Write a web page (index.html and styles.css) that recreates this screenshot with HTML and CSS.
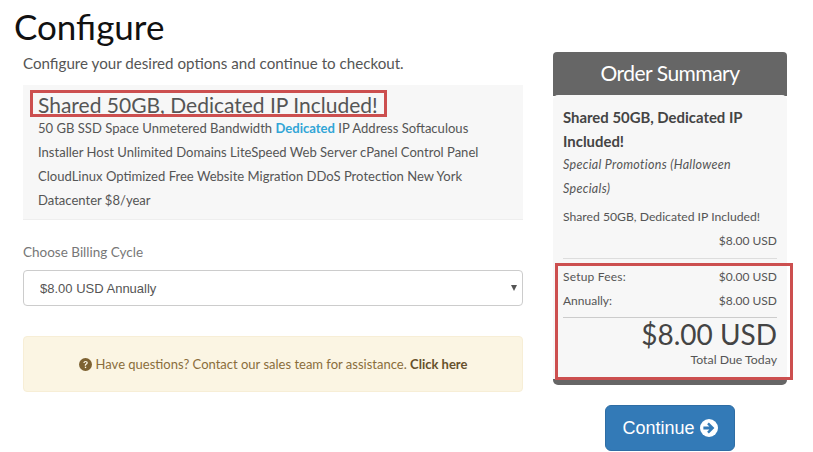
FILE: index.html
```html
<!DOCTYPE html>
<html lang="en">
<head>
<meta charset="utf-8">
<title>Configure</title>
<link rel="stylesheet" href="styles.css">
</head>
<body>
<h1 class="title">Configure</h1>
<div class="layout">
  <main class="main">
    <p class="intro">Configure your desired options and continue to checkout.</p>
    <section class="product">
      <h2 class="product-name">Shared 50GB, Dedicated IP Included!</h2>
      <p class="features">50 GB SSD Space Unmetered Bandwidth <span class="accent">Dedicated</span> IP Address Softaculous Installer Host Unlimited Domains LiteSpeed Web Server cPanel Control Panel CloudLinux Optimized Free Website Migration DDoS Protection New York Datacenter $8/year</p>
      <span class="mark mark-product"></span>
    </section>
    <label class="field-label" for="cycle">Choose Billing Cycle</label>
    <div class="select-wrap">
      <select class="select" id="cycle"><option>$8.00 USD Annually</option></select>
    </div>
    <div class="alert">
      <svg class="alert-icon" viewBox="0 0 24 24" aria-hidden="true"><circle cx="12" cy="12" r="12" fill="#7d6232"/><path d="M8 9.2c.2-2.4 2-3.7 4.200-3.700 2.300 0 4 1.400 4 3.400 0 1.600-.9 2.400-2 3.100-1 .6-1.300 1-1.300 2.100h-2.300c0-1.800.5-2.600 1.700-3.400.9-.6 1.500-1 1.500-1.800 0-.8-.7-1.400-1.600-1.400-1 0-1.700.6-1.800 1.700z" fill="#fbf5e3"/><rect x="10.800" y="16" width="2.500" height="2.600" fill="#fbf5e3"/></svg>
      <span>Have questions? Contact our sales team for assistance. <b class="alert-link">Click here</b></span>
    </div>
  </main>
  <aside class="side">
    <div class="summary">
      <h2 class="summary-head">Order Summary</h2>
      <div class="summary-body">
        <div class="item-name">Shared 50GB, Dedicated IP Included!</div>
        <div class="item-group">Special Promotions (Halloween Specials)</div>
        <div class="item-line">Shared 50GB, Dedicated IP Included!</div>
        <div class="item-price">$8.00 USD</div>
        <div class="totals">
          <div class="row"><span class="row-wide">Setup Fees:</span><span>$0.00 USD</span></div>
          <div class="row"><span>Annually:</span><span>$8.00 USD</span></div>
        </div>
        <div class="total">
          <div class="total-amount">$8.00 USD</div>
          <div class="total-label">Total Due Today</div>
        </div>
      </div>
      <span class="mark mark-summary"></span>
    </div>
    <button class="continue" type="button">Continue
      <svg class="continue-icon" viewBox="0 0 24 24" aria-hidden="true"><circle cx="12" cy="12" r="12" fill="#fff"/><path d="M4.500 10h8l-3-3 2.300-2.300L19.200 12l-7.400 7.300L9.500 17l3-3h-8z" fill="#337ab7"/></svg>
    </button>
  </aside>
</div>
</body>
</html>
```
FILE: styles.css
```css
* { box-sizing: border-box; }
html, body { margin: 0; background: #fff; }
body {
  width: 813px;
  height: 452px;
  overflow: hidden;
  font-family: "Lato", "Noto Sans", sans-serif;
  color: #555;
  padding: 4px 26px 0 14px;
}
.title {
  margin: 0;
  font-size: 35px;
  font-weight: 400;
  line-height: 44px;
  color: #111;
}
.layout {
  display: flex;
  gap: 30px;
  align-items: flex-start;
  padding-left: 9px;
  margin-top: 4px;
}
.main { width: 500px; flex: none; }
.side { width: 234px; flex: none; display: flex; flex-direction: column; align-items: center; }
.intro {
  margin: -1px 0 0;
  height: 34px;
  font-size: 15.150px;
  line-height: 24px;
  color: #555;
}
.product {
  position: relative;
  background: #f7f7f7;
  border-bottom: 1px solid #eee;
  height: 135px;
  padding: 8px 15px 0;
}
.product-name {
  margin: 0;
  font-size: 21px;
  font-weight: 400;
  line-height: 23px;
  color: #555;
}
.features {
  margin: 0;
  font-size: 13.050px;
  line-height: 24px;
  color: #555;
}
.accent { color: #31a5d6; font-weight: 700; }
.mark {
  position: absolute;
  border: 3px solid #cc4f4f;
  pointer-events: none;
}
.mark-product { left: 7px; top: 5px; width: 357px; height: 27px; }
.field-label {
  display: block;
  margin-top: 22px;
  font-size: 13.500px;
  line-height: 20px;
  color: #777;
}
.select-wrap { position: relative; margin-top: 8px; height: 36px; }
.select-wrap::after {
  content: "";
  position: absolute;
  right: 6px;
  top: 15px;
  border-left: 3px solid transparent;
  border-right: 3px solid transparent;
  border-top: 6px solid #555;
}
.select {
  display: block;
  appearance: none;
  width: 100%;
  height: 36px;
  padding: 0 16px;
  background: #fff;
  border: 1px solid #ccc;
  border-radius: 4px;
  font-family: "Liberation Sans", sans-serif;
  font-size: 13px;
  color: #555;
}
.alert {
  margin-top: 30px;
  height: 56px;
  display: flex;
  align-items: center;
  justify-content: center;
  gap: 4px;
  background: #fbf5e3;
  border: 1px solid #f7eed6;
  border-radius: 4px;
  font-size: 13px;
  color: #8a6d3b;
}
.alert-icon { width: 13px; height: 13px; flex: none; }
.alert-link { color: #66512c; }
.summary { position: relative; width: 234px; }
.summary-head {
  margin: 0;
  height: 44px;
  background: #666;
  border-radius: 4px 4px 0 0;
  font-size: 21px;
  font-weight: 400;
  line-height: 42px;
  letter-spacing: -.5px;
  text-align: center;
  color: #fff;
}
.summary-body {
  background: #f7f7f7;
  border-bottom: 6px solid #666;
  border-radius: 5px;
  margin-top: -1px;
  padding: 10px 10px 0;
  height: 290px;
  font-size: 12px;
  color: #555;
}
.item-name { font-size: 14.900px; font-weight: 700; line-height: 24px; color: #444; }
.item-group { font-style: italic; font-size: 12.500px; letter-spacing: .3px; line-height: 24px; }
.item-line { margin-top: 4px; font-size: 12.200px; line-height: 24px; }
.item-price { text-align: right; line-height: 24px; }
.totals { margin-top: 5px; padding-top: 6px; border-top: 1px solid #ddd; }
.row { display: flex; justify-content: space-between; line-height: 24px; }
.row-wide { letter-spacing: .2px; }
.total { margin-top: 4px; border-top: 1px solid #ccc; text-align: right; }
.total-amount { font-size: 28px; line-height: 33px; color: #444; }
.total-label { line-height: 17px; font-size: 12.300px; }
.mark-summary { left: 2px; top: 211px; width: 238px; height: 117px; }
.continue {
  margin-top: 20px;
  width: 130px;
  height: 46px;
  display: flex;
  align-items: center;
  justify-content: center;
  gap: 5px;
  padding: 0;
  background: #337ab7;
  border: 1px solid #2e6da4;
  border-radius: 6px;
  font-family: "Liberation Sans", sans-serif;
  font-size: 18px;
  color: #fff;
}
.continue-icon { width: 18px; height: 18px; flex: none; }
```
